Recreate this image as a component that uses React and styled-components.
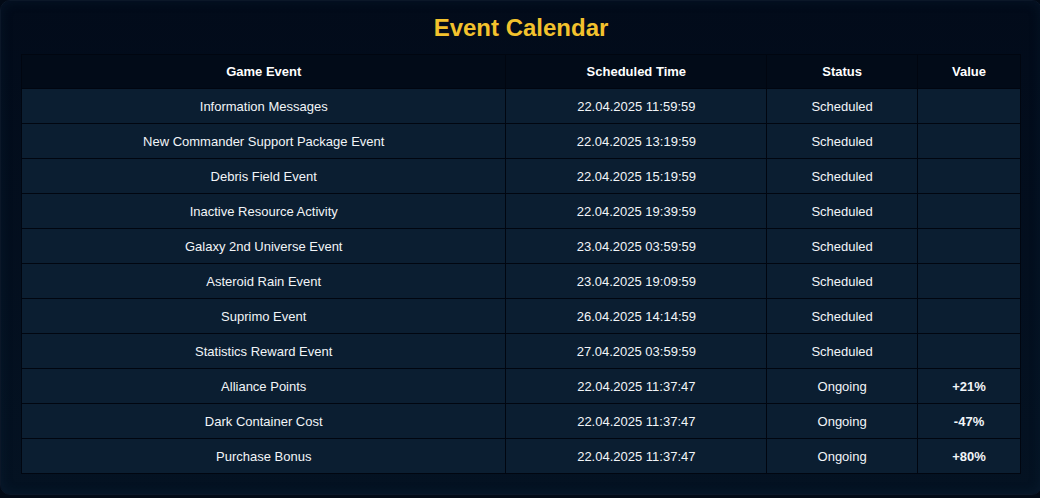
import React from 'react';
import styled, { createGlobalStyle } from 'styled-components';

const GlobalStyle = createGlobalStyle`
  body {
    margin: 0;
    background: #020a16;
    font-family: "Liberation Sans", Arial, sans-serif;
  }
`;

const Panel = styled.div`
  width: 1042px;
  height: 495px;
  box-sizing: border-box;
  padding: 12px 20px 0 20px;
  background: linear-gradient(180deg, #020b1a 0%, #041222 100%);
  border: 1px solid #0b1728;
  border-radius: 10px;
  box-shadow: inset 0 0 12px rgba(20, 50, 80, 0.25);
`;

const Title = styled.h2`
  margin: 0 0 11px;
  height: 30px;
  line-height: 30px;
  text-align: center;
  font-size: 24px;
  font-weight: bold;
  color: #f3c22d;
`;

const Table = styled.table`
  width: 1000px;
  border-collapse: collapse;
  border: 1px solid #010610;
`;

const HeadCell = styled.th`
  height: 33px;
  padding: 0;
  background: #020b18;
  border: 1px solid #010610;
  color: #ffffff;
  font-size: 13px;
  font-weight: bold;
  text-align: center;
`;

const Cell = styled.td`
  height: 34px;
  padding: 0;
  background: #0b1e31;
  border: 1px solid #010610;
  color: #f2f5f8;
  font-size: 13px;
  font-weight: ${(p) => (p.$bold ? 'bold' : 'normal')};
  text-align: center;
`;

const events = [
  ['Information Messages', '22.04.2025 11:59:59', 'Scheduled', ''],
  ['New Commander Support Package Event', '22.04.2025 13:19:59', 'Scheduled', ''],
  ['Debris Field Event', '22.04.2025 15:19:59', 'Scheduled', ''],
  ['Inactive Resource Activity', '22.04.2025 19:39:59', 'Scheduled', ''],
  ['Galaxy 2nd Universe Event', '23.04.2025 03:59:59', 'Scheduled', ''],
  ['Asteroid Rain Event', '23.04.2025 19:09:59', 'Scheduled', ''],
  ['Suprimo Event', '26.04.2025 14:14:59', 'Scheduled', ''],
  ['Statistics Reward Event', '27.04.2025 03:59:59', 'Scheduled', ''],
  ['Alliance Points', '22.04.2025 11:37:47', 'Ongoing', '+21%'],
  ['Dark Container Cost', '22.04.2025 11:37:47', 'Ongoing', '-47%'],
  ['Purchase Bonus', '22.04.2025 11:37:47', 'Ongoing', '+80%'],
];

export default function App() {
  return (
    <>
      <GlobalStyle />
      <Panel>
        <Title>Event Calendar</Title>
        <Table>
          <colgroup>
            <col style={{ width: 485 }} />
            <col style={{ width: 261 }} />
            <col style={{ width: 151 }} />
            <col style={{ width: 103 }} />
          </colgroup>
          <thead>
            <tr>
              <HeadCell>Game Event</HeadCell>
              <HeadCell>Scheduled Time</HeadCell>
              <HeadCell>Status</HeadCell>
              <HeadCell>Value</HeadCell>
            </tr>
          </thead>
          <tbody>
            {events.map(([name, time, status, value]) => (
              <tr key={name}>
                <Cell>{name}</Cell>
                <Cell>{time}</Cell>
                <Cell>{status}</Cell>
                <Cell $bold>{value}</Cell>
              </tr>
            ))}
          </tbody>
        </Table>
      </Panel>
    </>
  );
}
